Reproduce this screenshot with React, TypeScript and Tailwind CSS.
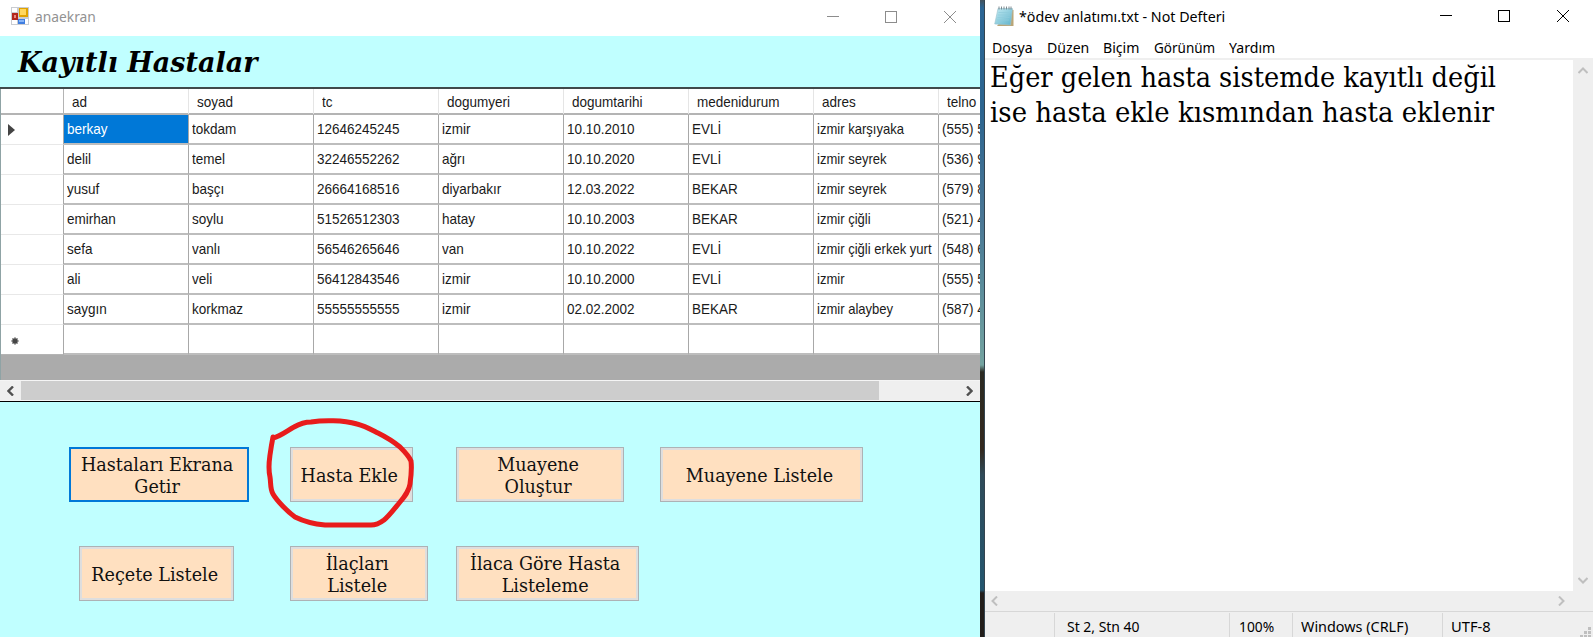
import React from "react";

const columns = ["ad", "soyad", "tc", "dogumyeri", "dogumtarihi", "medenidurum", "adres", "telno"];

const rows = [
  ["berkay", "tokdam", "12646245245", "izmir", "10.10.2010", "EVLİ", "izmir karşıyaka", "(555) 5"],
  ["delil", "temel", "32246552262", "ağrı", "10.10.2020", "EVLİ", "izmir seyrek", "(536) 9"],
  ["yusuf", "başçı", "26664168516", "diyarbakır", "12.03.2022", "BEKAR", "izmir seyrek", "(579) 8"],
  ["emirhan", "soylu", "51526512303", "hatay", "10.10.2003", "BEKAR", "izmir çiğli", "(521) 4"],
  ["sefa", "vanlı", "56546265646", "van", "10.10.2022", "EVLİ", "izmir çiğli erkek yurt", "(548) 6"],
  ["ali", "veli", "56412843546", "izmir", "10.10.2000", "EVLİ", "izmir", "(555) 5"],
  ["saygın", "korkmaz", "55555555555", "izmir", "02.02.2002", "BEKAR", "izmir alaybey", "(587) 4"],
  ["", "", "", "", "", "", "", ""],
];

const segoe = "font-['Noto_Sans',sans-serif]";
const georgia = "font-['DejaVu_Serif',serif]";

function WindowControls({ className }: { className: string }) {
  return (
    <svg className={className} width="140" height="34" viewBox="0 0 140 34" fill="none" stroke="currentColor">
      <path d="M7 16.5h12" />
      <rect x="65.5" y="11.5" width="11" height="11" />
      <path d="M124 11l12 12M136 11l-12 12" />
    </svg>
  );
}

function FormIcon() {
  return (
    <svg width="18" height="18" viewBox="0 0 18 18">
      <rect width="18" height="18" fill="#c9ccd1" />
      <rect x="1" y="1" width="5" height="4" fill="#fff" />
      <rect x="1" y="13" width="5" height="4" fill="#fff" />
      <rect x="14" y="12" width="3" height="5" fill="#fff" />
      <rect x="1" y="6" width="6" height="7" fill="#b3261e" />
      <rect x="3" y="8" width="2" height="3" fill="#e88a80" />
      <rect x="8" y="1" width="9" height="9" fill="#e0a200" />
      <rect x="9" y="2" width="6" height="6" fill="#ffd75e" />
      <rect x="7" y="12" width="7" height="5" fill="#3f7de0" />
      <rect x="8" y="13" width="5" height="2" fill="#86b4f7" />
    </svg>
  );
}

function NotepadIcon() {
  return (
    <svg width="20" height="21" viewBox="0 0 20 21">
      <defs>
        <linearGradient id="pad" x1="0" y1="0" x2="1" y2="1">
          <stop offset="0" stopColor="#c4ebf3" />
          <stop offset="1" stopColor="#5fb3cb" />
        </linearGradient>
      </defs>
      <path d="M17 3l2.500 1v16H3z" fill="#b9a577" />
      <path d="M4 2.500h14.500L16.500 19 .7 18z" fill="url(#pad)" stroke="#9cc3cf" strokeWidth=".6" />
      <path d="M4.500 6.500h12M4 9h12M3.600 11.500h12M3 14h12" stroke="#8fccdb" strokeWidth=".7" />
      <path d="M5 .5v3M7.500 .5v3M10 .5v3M12.500 .5v3M15 .5v3M17 .5v3" stroke="#6f7f86" strokeWidth=".9" />
    </svg>
  );
}

function FormButton({ className, children }: { className: string; children: React.ReactNode }) {
  return (
    <button
      className={`flex shrink-0 items-center justify-center border bg-[#ffe0c0] pt-[2px] text-center text-[18.5px] leading-[22px] text-[#111] ${georgia} ${className}`}
    >
      <span className="-ml-[4px] shrink-0 scale-x-[0.95] whitespace-nowrap">{children}</span>
    </button>
  );
}

const plain = "border-[#adb2b5] shadow-[inset_0_0_0_2px_#dedede]";

function PatientGrid() {
  return (
    <div className="h-[291px] overflow-hidden border-l border-[#8fa3a5] bg-[#ababab] font-['Liberation_Sans',sans-serif] text-[15px] text-[#1a1a1a]">
      <div className="grid h-[26px] grid-cols-[63px_repeat(8,125px)] border-b-2 border-[#b4b4b4] bg-white">
        <div className="border-r border-[#b4b4b4]" />
        {columns.map((c) => (
          <div key={c} className="flex items-center border-r border-[#e5e5e5] pl-2 pt-[2px]">
            <span className="origin-left scale-x-[0.9] whitespace-nowrap">{c}</span>
          </div>
        ))}
      </div>
      {rows.map((r, i) => (
        <div key={i} className="grid h-[30px] grid-cols-[63px_repeat(8,125px)] bg-white">
          <div className={`flex items-center border-r border-b border-r-[#a8a8a8] pl-[7px] pt-px ${i === 7 ? "border-b-[#b4b4b4]" : "border-b-[#e8e8e8]"}`}>
            {i === 0 && (
              <svg width="7" height="12" viewBox="0 0 7 12"><path d="M0 0l7 6-7 6z" fill="#444" /></svg>
            )}
            {i === 7 && (
              <svg className="ml-[3px] mt-px" width="8" height="8" viewBox="0 0 8 8">
                <path d="M4 .5v7M.5 4h7M1.500 1.500l5 5M6.500 1.500l-5 5" stroke="#444" strokeWidth="1.500" />
              </svg>
            )}
          </div>
          {r.map((v, j) => (
            <div
              key={j}
              className={`flex items-center overflow-hidden border-r border-b-2 border-r-[#a8a8a8] border-b-[#bdbdbd] pl-[2.500px] pt-px ${i === 0 && j === 0 ? "bg-[#0078d7] text-white" : ""}`}
            >
              <span className={`origin-left whitespace-nowrap ${j === 6 ? "scale-x-[0.87]" : "scale-x-[0.9]"}`}>{v}</span>
            </div>
          ))}
        </div>
      ))}
    </div>
  );
}

function FormWindow() {
  return (
    <section className="flex h-full w-[980px] shrink-0 flex-col overflow-hidden bg-[#c0ffff]">
      <header className="flex h-9 shrink-0 items-center bg-white pb-[4px] pl-[11px]">
        <FormIcon />
        <span className={`ml-[6px] flex-1 origin-left scale-x-[0.92] text-[15px] text-[#929292] ${segoe}`}>anaekran</span>
        <WindowControls className="mr-[20px] mt-[2px] text-[#8c8c8c]" />
      </header>
      <div className="flex h-[51px] shrink-0 items-center pl-[18px] pt-px">
        <h1 className={`origin-left whitespace-nowrap text-[27px] font-bold italic leading-none text-black ${georgia}`}>Kayıtlı Hastalar</h1>
      </div>
      <div className="shrink-0 border-t-2 border-[#3f4a4b]">
        <PatientGrid />
        <div className="flex h-[21px] items-center border-y border-[#f5f5f5] bg-[#efefef]">
          <svg className="mx-[7px]" width="7" height="10" viewBox="0 0 7 10" fill="none" stroke="#505050" strokeWidth="2.400"><path d="M6 .5L1.500 5 6 9.500" /></svg>
          <div className="h-[19px] w-[858px] bg-[#cdcdcd]" />
          <svg className="ml-auto mr-[7px]" width="7" height="10" viewBox="0 0 7 10" fill="none" stroke="#505050" strokeWidth="2.400"><path d="M1 .5L5.500 5 1 9.500" /></svg>
        </div>
        <div className="h-px bg-black" />
      </div>
      <div className="relative flex flex-1 flex-col pt-[45px]">
        <div className="flex pl-[69px]">
          <FormButton className="h-[55px] w-[180px] border-[#0078d7] shadow-[inset_0_0_0_1px_#0078d7]">Hastaları Ekrana<br />Getir</FormButton>
          <FormButton className={`ml-[41px] h-[55px] w-[123px] ${plain}`}>Hasta Ekle</FormButton>
          <FormButton className={`ml-[43px] h-[55px] w-[168px] ${plain}`}>Muayene<br />Oluştur</FormButton>
          <FormButton className={`ml-[36px] h-[55px] w-[203px] ${plain}`}>Muayene Listele</FormButton>
        </div>
        <div className="mt-[44px] flex pl-[79px]">
          <FormButton className={`h-[55px] w-[155px] ${plain}`}>Reçete Listele</FormButton>
          <FormButton className={`ml-[56px] h-[55px] w-[138px] ${plain}`}>İlaçları<br />Listele</FormButton>
          <FormButton className={`ml-[28px] h-[55px] w-[183px] ${plain}`}>İlaca Göre Hasta<br />Listeleme</FormButton>
        </div>
        <svg className="absolute left-[250px] top-[8px]" width="180" height="130" viewBox="250 410 180 130" fill="none" stroke="#e81c1c" strokeWidth="5" strokeLinecap="round" strokeLinejoin="round">
          <path d="M273 438C281 436 288 430 294 427C301 423 306 422 311 422C323 420 343 420 357 424C365 426 372 430 378 433C386 437 394 442 400 447C405 452 409 456 411 461C412 469 411 477 410 484C409 491 405 496 400 502C395 508 389 516 384 520C380 523 377 525 371 525H325C314 524 303 521 295 517C288 512 277 501 273 494C270 489 271 483 270 477C268 468 269 462 270 455C271 448 272 442 273 437" />
        </svg>
      </div>
    </section>
  );
}

function NotepadWindow() {
  return (
    <section className={`flex h-full flex-1 flex-col bg-white text-black ${segoe}`}>
      <header className="flex h-[33px] shrink-0 items-center pb-px pl-[9px]">
        <NotepadIcon />
        <span className="ml-[5px] flex-1 origin-left scale-x-[0.95] whitespace-nowrap text-[15px]">*ödev anlatımı.txt - Not Defteri</span>
        <WindowControls className="mr-[20px]" />
      </header>
      <nav className="flex h-[25px] shrink-0 items-center pl-[7px] pt-[4px] text-[15px]">
        <span className="w-[55px] origin-left scale-x-[0.94]">Dosya</span>
        <span className="w-[56px] origin-left scale-x-[0.94]">Düzen</span>
        <span className="w-[51px] origin-left scale-x-[0.94]">Biçim</span>
        <span className="w-[75px] origin-left scale-x-[0.9]">Görünüm</span>
        <span className="origin-left scale-x-[0.94]">Yardım</span>
      </nav>
      <div className="flex flex-1 border-t-2 border-[#efefef]">
        <div className={`flex-1 pl-[5px] text-[28.5px] leading-[35px] ${georgia}`}>
          <p className="origin-left scale-x-[0.9] whitespace-nowrap">Eğer gelen hasta sistemde kayıtlı değil</p>
          <p className="origin-left scale-x-[0.911] whitespace-nowrap">ise hasta ekle kısmından hasta eklenir</p>
        </div>
        <div className="flex w-5 flex-col items-center justify-between bg-[#efefef] pb-[7px] pt-[7px]">
          <svg width="10" height="7" viewBox="0 0 10 7" fill="none" stroke="#bfbfbf" strokeWidth="2"><path d="M.5 6L5 1.500 9.500 6" /></svg>
          <svg width="10" height="7" viewBox="0 0 10 7" fill="none" stroke="#bfbfbf" strokeWidth="2"><path d="M.5 1L5 5.500 9.500 1" /></svg>
        </div>
      </div>
      <div className="flex h-5 shrink-0 items-center justify-between bg-[#efefef] pl-[6px] pr-[28px]">
        <svg width="7" height="10" viewBox="0 0 7 10" fill="none" stroke="#bfbfbf" strokeWidth="2"><path d="M6 .5L1.500 5 6 9.500" /></svg>
        <svg width="7" height="10" viewBox="0 0 7 10" fill="none" stroke="#bfbfbf" strokeWidth="2"><path d="M1 .5L5.500 5 1 9.500" /></svg>
      </div>
      <footer className="flex h-[26px] shrink-0 border-t border-[#d7d7d7] bg-[#efefef] pt-px text-[15px] leading-[27px]">
        <div className="w-[70px] border-r border-[#d7d7d7]" />
        <div className="w-[175px] border-r border-[#d7d7d7] pl-3"><span className="inline-block origin-left scale-x-[0.93] whitespace-nowrap">St 2, Stn 40</span></div>
        <div className="w-[63px] border-r border-[#d7d7d7] pl-[9px]"><span className="inline-block origin-left scale-x-[0.92]">100%</span></div>
        <div className="w-[150px] border-r border-[#d7d7d7] pl-2"><span className="inline-block origin-left scale-x-[0.96] whitespace-nowrap">Windows (CRLF)</span></div>
        <div className="flex-1 pl-2"><span className="inline-block origin-left scale-x-[0.98]">UTF-8</span></div>
        <svg className="mr-[2px] self-end" width="11" height="10" viewBox="0 0 11 10" fill="#bfbfbf">
          <path d="M8 0h3v3H8zM8 4h3v3H8zM4 4h3v3H4zM8 8h3v2H8zM4 8h3v2H4zM0 8h3v2H0z" />
        </svg>
      </footer>
    </section>
  );
}

export default function App() {
  return (
    <main className="flex h-[637px] w-[1593px] overflow-hidden">
      <FormWindow />
      <div className="w-[5px] shrink-0 border-r border-[#34444f] bg-[linear-gradient(to_bottom,#42515b_0px,#2b6594_8px,#2c6590_110px,#4a7795_220px,#56889a_270px,#74a3a0_365px,#2b2a22_372px,#33291f_450px,#2f4b59_475px,#23566f_590px,#221d1a_593px)]" />
      <NotepadWindow />
    </main>
  );
}
